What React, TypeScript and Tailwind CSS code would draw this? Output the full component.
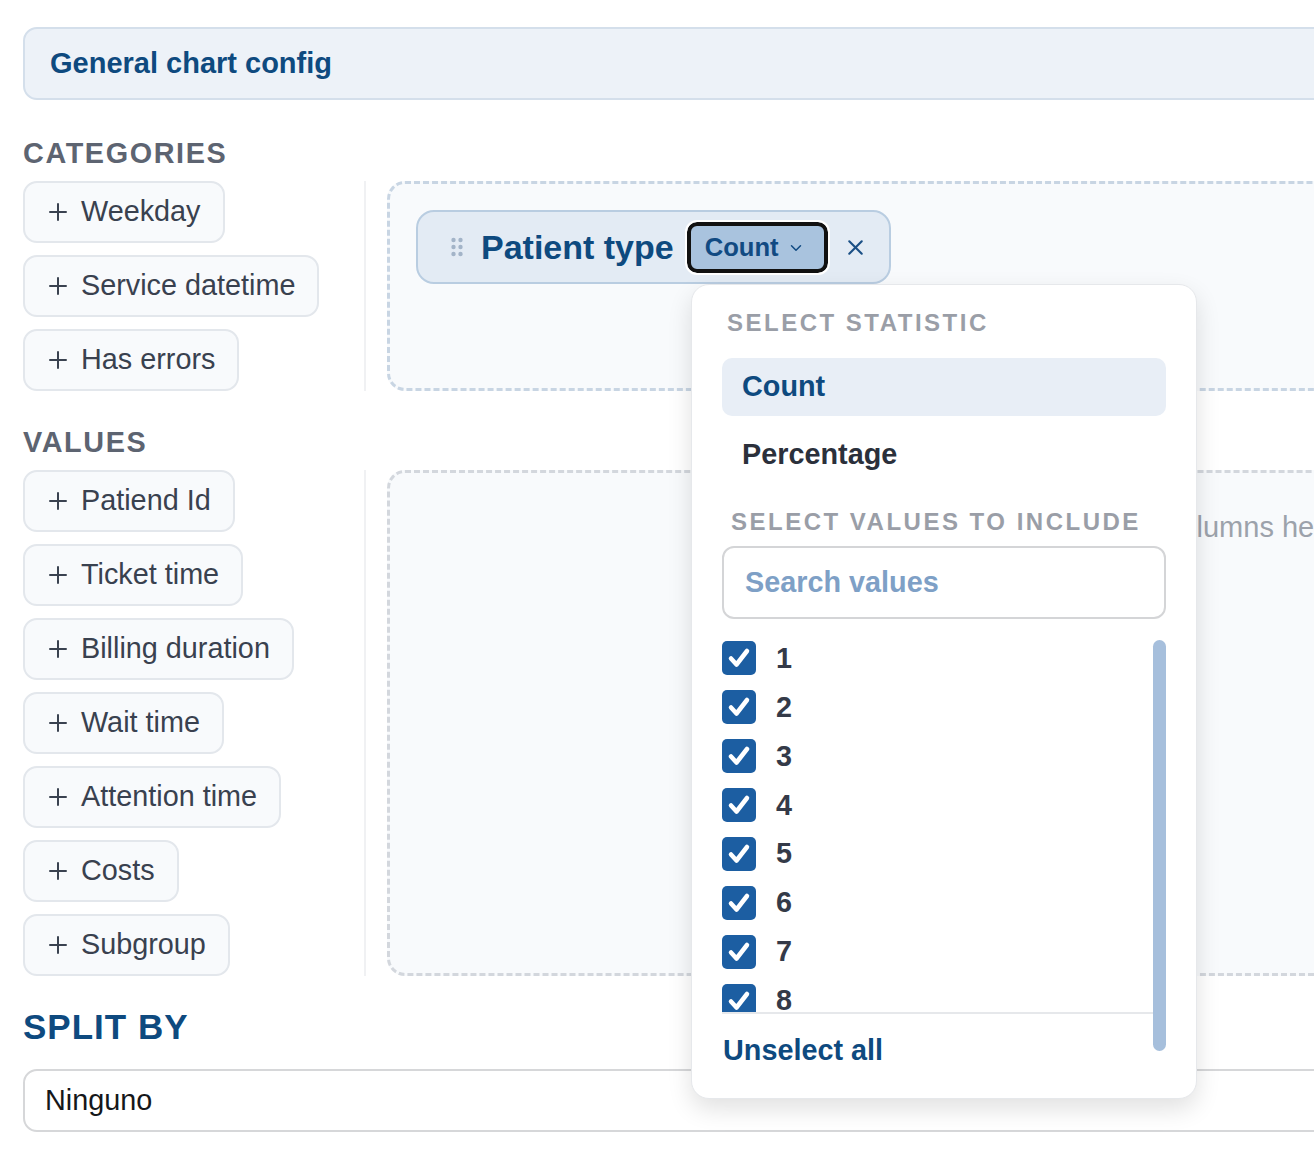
import { ChevronDown, X } from "lucide-react"

const categories = ["Weekday", "Service datetime", "Has errors"]
const values = ["Patiend Id", "Ticket time", "Billing duration", "Wait time", "Attention time", "Costs", "Subgroup"]
const options = ["1", "2", "3", "4", "5", "6", "7", "8", "9", "10"]

function PlusIcon() {
  return (
    <svg width="18" height="18" viewBox="0 0 18 18" className="shrink-0">
      <path d="M9 1v16M1 9h16" stroke="#3a4250" strokeWidth="2" strokeLinecap="round" />
    </svg>
  )
}

function FieldButton({ label }: { label: string }) {
  return (
    <button className="flex h-[62px] items-center gap-[14px] rounded-[14px] border-2 border-[#e3e7ec] bg-[#f8fafc] pl-[24px] pr-[22px] text-[28.8px] text-[#39414f]">
      <PlusIcon />
      <span>{label}</span>
    </button>
  )
}

function SectionLabel({ children, className }: { children: string; className: string }) {
  return (
    <div className={`${className} mb-[13px] text-[28.8px] font-bold leading-[29px] tracking-[1.6px] text-[#5d6471]`}>
      {children}
    </div>
  )
}

function DragDots() {
  return (
    <svg width="12" height="20" viewBox="0 0 12 20" className="shrink-0">
      {[3, 10, 17].map((y) => (
        <g key={y} fill="#a3b4c8">
          <circle cx="2.5" cy={y} r="2.2" />
          <circle cx="9.5" cy={y} r="2.2" />
        </g>
      ))}
    </svg>
  )
}

function Checkbox() {
  return (
    <span className="flex h-[34px] w-[34px] shrink-0 items-center justify-center rounded-[5px] bg-[#1c5ea2]">
      <svg width="26" height="26" viewBox="0 0 26 26">
        <path d="M5 13.5l5.5 6L21 6" fill="none" stroke="white" strokeWidth="4.5" strokeLinecap="round" strokeLinejoin="round" />
      </svg>
    </span>
  )
}

function StatisticPopup() {
  return (
    <div className="absolute left-[691px] top-[284px] h-[815px] w-[506px] rounded-[18px] border border-[#e6e8eb] bg-white px-[30px] pt-[25px] shadow-[0_10px_24px_rgba(0,0,0,0.12)]">
      {/* Statistic */}
      <div className="pl-[5px] text-[24px] font-bold leading-[26px] tracking-[2.5px] text-[#9a9ea7]">SELECT STATISTIC</div>
      <div className="mt-[22px] flex flex-col gap-[10px]">
        <div className="flex h-[58px] items-center rounded-[10px] bg-[#e8eef6] pl-[20px] text-[28.8px] font-bold text-[#0e4a7f]">
          Count
        </div>
        <div className="flex h-[58px] items-center rounded-[10px] pl-[20px] text-[28.8px] font-bold text-[#2b303b]">
          Percentage
        </div>
      </div>

      {/* Values */}
      <div className="mt-[25px] pl-[9px] text-[24px] font-bold leading-[26px] tracking-[2.5px] text-[#9a9ea7]">
        SELECT VALUES TO INCLUDE
      </div>
      <div className="mt-[11px] flex h-[73px] items-center rounded-[12px] border-2 border-[#d4d5d7] pl-[21px] text-[28.8px] font-bold text-[#7ea0c6]">
        Search values
      </div>

      <div className="mt-[15px] flex">
        <div className="w-[431px]">
          <div className="h-[380px] overflow-hidden border-b-2 border-[#e6e8eb]">
            {options.map((o) => (
              <div key={o} className="flex h-[48.9px] items-center gap-[20px]">
                <Checkbox />
                <span className="text-[28.8px] font-bold text-[#343a48]">{o}</span>
              </div>
            ))}
          </div>
          <div className="pt-[15px] pl-px text-[28.8px] font-bold text-[#0e4a7f]">Unselect all</div>
        </div>
        <div className="mt-[6px] h-[411px] w-[13px] rounded-full bg-[#a6bfdc]" />
      </div>
    </div>
  )
}

export default function App() {
  return (
    <div className="relative h-[1150px] w-[1314px] overflow-hidden bg-white font-['Liberation_Sans',Arial,sans-serif]">
      <div className="relative w-[1440px] pl-[23px] pt-[27px]">
        {/* Header */}
        <div className="flex h-[73px] items-center rounded-[14px] border-2 border-[#d4dfeb] bg-[#edf2f8] pl-[25px] text-[29px] font-bold text-[#0e4a7f]">
          General chart config
        </div>

        {/* Categories */}
        <SectionLabel className="mt-[39px]">CATEGORIES</SectionLabel>
        <div className="flex">
          <div className="flex w-[341px] flex-col items-start gap-3">
            {categories.map((c) => (
              <FieldButton key={c} label={c} />
            ))}
          </div>
          <div className="w-[2px] bg-[#f0f1f3]" />
          <div className="ml-[21px] flex-1 rounded-[18px] border-[3px] border-dashed border-[#c8d5e3] bg-[#f8fafc] pl-[26px] pt-[26px]">
            <div className="inline-flex h-[74px] items-center rounded-[18px] border-2 border-[#b9cde1] bg-[#e3ebf4] pl-[33px] pr-[21px]">
              <DragDots />
              <span className="ml-[18px] text-[34px] font-bold text-[#0e4a7f]">Patient type</span>
              <span className="ml-[13px] flex h-[51px] items-center rounded-[10px] border-4 border-[#111] bg-[#a9c3de] pl-[14px] pr-[19px] text-[25.6px] font-bold text-[#114a82] outline-2 outline-white">
                Count
                <ChevronDown size={18} strokeWidth={2} className="ml-[8px] mt-[2px]" />
              </span>
              <X size={25} strokeWidth={2} className="ml-[15px] text-[#1a4f85]" />
            </div>
          </div>
        </div>

        {/* Values */}
        <SectionLabel className="mt-[37px]">VALUES</SectionLabel>
        <div className="flex">
          <div className="flex w-[341px] flex-col items-start gap-3">
            {values.map((v) => (
              <FieldButton key={v} label={v} />
            ))}
          </div>
          <div className="w-[2px] bg-[#f0f1f3]" />
          <div className="ml-[21px] flex-1 rounded-[18px] border-[3px] border-dashed border-[#d3d7dd] bg-[#f8fafc] pl-[705px] pt-[33px]">
            <span className="text-[29px] text-[#9ca2ab]">Drag columns here</span>
          </div>
        </div>

        {/* Split by */}
        <div className="mt-[33px] text-[35px] font-bold leading-[36px] tracking-[1px] text-[#0e4a7f]">SPLIT BY</div>
        <div className="mt-[24px] flex h-[63px] items-center rounded-[14px] border-2 border-[#d6d7d9] bg-white pl-[20px] text-[28.8px] text-[#15171a]">
          Ninguno
        </div>

        <StatisticPopup />
      </div>
    </div>
  )
}
